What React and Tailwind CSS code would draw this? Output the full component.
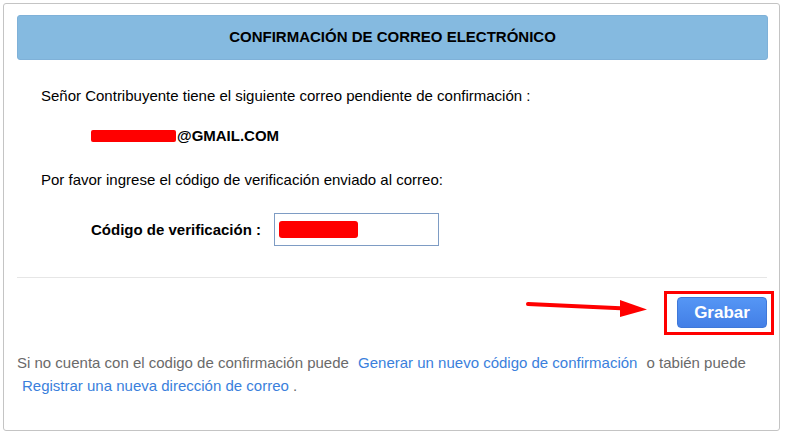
import React from "react";

const Redacted = ({ className }) => (
  <span className={`inline-block bg-[#ff0000] rounded-[2px] ${className}`} />
);

const App = () => (
  <div className="relative w-[786px] h-[437px] bg-white font-['Liberation_Sans',Arial,sans-serif] text-[15px] text-black">
    <div className="absolute left-[3px] top-[3px] w-[777px] h-[428px] border border-[#c4c4c4] rounded-[3px] pl-[13px] pr-[11px] pt-[11px]">
      <div className="h-[45px] bg-[#85bae0] border border-[#7fb1d8] rounded-[3px] flex items-center justify-center">
        <h1 className="font-bold text-[15px]">CONFIRMACIÓN DE CORREO ELECTRÓNICO</h1>
      </div>

      <div className="pl-[24px]">
        <p className="mt-[26px] leading-5">Señor Contribuyente tiene el siguiente correo pendiente de confirmación :</p>
        <div className="mt-[20px] pl-[50px] h-5 flex items-center font-bold">
          <Redacted className="w-[85px] h-[12px] mr-[1px]" />
          <span>@GMAIL.COM</span>
        </div>
        <p className="mt-[24px] leading-5">Por favor ingrese el código de verificación enviado al correo:</p>
        <div className="mt-[23px] pl-[50px] flex items-center gap-[13px]">
          <label className="font-bold leading-5">Código de verificación :</label>
          <div className="w-[165px] h-[33px] border border-[#7e9cc4] flex items-center pl-[4px]">
            <Redacted className="w-[79px] h-[17px] rounded-[3px]" />
          </div>
        </div>
      </div>

      <div className="mt-[31px] border-t border-[#e6e6e6] mr-[1px]" />

      <div className="flex justify-end pt-[19px] pr-[1px]">
        <button className="w-[90px] h-[31px] rounded-[4px] bg-gradient-to-b from-[#5596f5] to-[#437fe6] border border-[#3f78d9] text-white font-bold text-[17px]">
          Grabar
        </button>
      </div>

      <div className="mt-[23px] text-[15px] leading-[23px] text-[#6a6a6a]">
        <span>Si no cuenta con el codigo de confirmación puede </span>
        <a className="text-[#3a7fdc] ml-[5px] mr-[5px]">Generar un nuevo código de confirmación</a>
        <span> o tabién puede</span>
        <br />
        <a className="text-[#3a7fdc] ml-[5px]">Registrar una nueva dirección de correo</a>
        <span> .</span>
      </div>
    </div>

    <div className="absolute left-[664px] top-[291px] w-[110px] h-[44px] border-[3px] border-[#ff0000]" />
    <svg className="absolute left-0 top-0" width="786" height="437">
      <line x1="528" y1="304" x2="626" y2="308.5" stroke="#ff0000" strokeWidth="4" strokeLinecap="round" />
      <polygon points="620,300 647,309.5 620,317" fill="#ff0000" />
    </svg>
  </div>
);

export default App;
